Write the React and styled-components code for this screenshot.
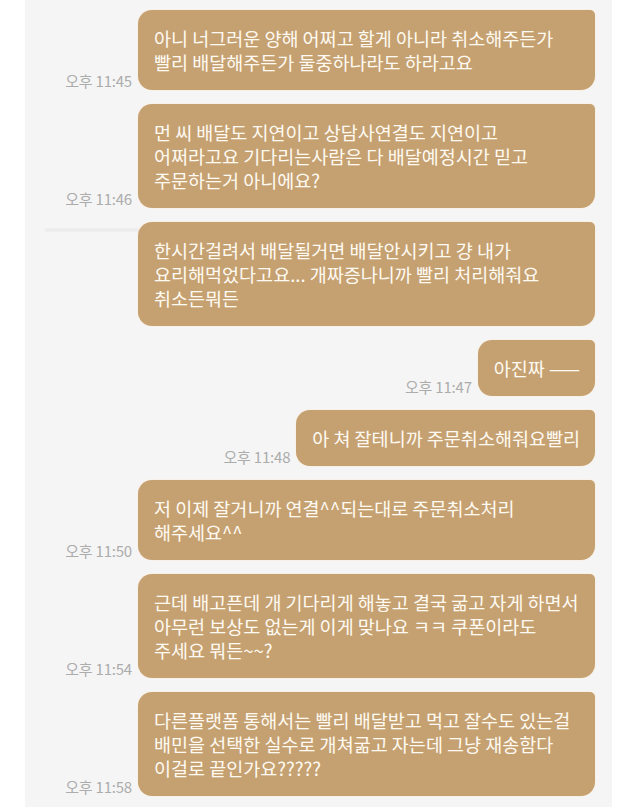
import React from 'react';
import styled, { createGlobalStyle } from 'styled-components';

const GlobalStyle = createGlobalStyle`
  html, body {
    margin: 0;
    padding: 0;
    background: #ffffff;
  }
  body {
    font-family: "Noto Sans CJK KR", "Noto Sans", sans-serif;
  }
`;

const Page = styled.div`
  width: 640px;
  min-height: 807px;
  background: #ffffff;
  overflow: hidden;
`;

const ChatPanel = styled.div`
  margin-left: 25px;
  width: 587px;
  min-height: 807px;
  box-sizing: border-box;
  padding: 10px 17px 0 0;
  background: #f5f5f5;
  display: flex;
  flex-direction: column;
  gap: 14px;
`;

const Row = styled.div`
  position: relative;
  display: flex;
  justify-content: flex-end;
  align-items: flex-end;
  gap: 6px;

  ${({ $shade }) => $shade && `
    &::before {
      content: '';
      position: absolute;
      left: 20px;
      top: 7px;
      width: 94px;
      height: 2px;
      background: rgba(0, 0, 0, 0.07);
      filter: blur(1px);
    }
  `}
`;

const Time = styled.span`
  font-size: 15px;
  line-height: 16px;
  color: #acacac;
  letter-spacing: -0.2px;
  white-space: nowrap;
  margin-bottom: 1px;
`;

const Bubble = styled.div`
  box-sizing: border-box;
  width: ${({ $full }) => ($full ? '457px' : 'auto')};
  padding: 16px 15px 16px 16px;
  background: #c5a172;
  border-radius: 14px 5px 14px 14px;
  box-shadow: 0 0 0 1px rgba(255, 236, 210, 0.35);
  color: #fffaf1;
  font-size: 18.5px;
  line-height: 24px;
  white-space: pre;
`;

const messages = [
  {
    lines: ['아니 너그러운 양해 어쩌고 할게 아니라 취소해주든가', '빨리 배달해주든가 둘중하나라도 하라고요'],
    time: '오후 11:45',
  },
  {
    lines: ['먼 씨 배달도 지연이고 상담사연결도 지연이고', '어쩌라고요 기다리는사람은 다 배달예정시간 믿고', '주문하는거 아니에요?'],
    time: '오후 11:46',
  },
  {
    lines: ['한시간걸려서 배달될거면 배달안시키고 걍 내가', '요리해먹었다고요... 개짜증나니까 빨리 처리해줘요', '취소든뭐든'],
    time: '',
    shade: true,
  },
  { lines: ['아진짜 ——'], time: '오후 11:47' },
  { lines: ['아 쳐 잘테니까 주문취소해줘요빨리'], time: '오후 11:48' },
  {
    lines: ['저 이제 잘거니까 연결^^되는대로 주문취소처리', '해주세요^^'],
    time: '오후 11:50',
  },
  {
    lines: ['근데 배고픈데 개 기다리게 해놓고 결국 굶고 자게 하면서', '아무런 보상도 없는게 이게 맞나요 ㅋㅋ 쿠폰이라도', '주세요 뭐든~~?'],
    time: '오후 11:54',
  },
  {
    lines: ['다른플랫폼 통해서는 빨리 배달받고 먹고 잘수도 있는걸', '배민을 선택한 실수로 개쳐굶고 자는데 그냥 재송함다', '이걸로 끝인가요?????'],
    time: '오후 11:58',
  },
];

const App = () => (
  <Page>
    <GlobalStyle />
    <ChatPanel>
      {messages.map((msg, i) => (
        <Row key={i} $shade={msg.shade}>
          {msg.time && <Time>{msg.time}</Time>}
          <Bubble $full={msg.lines.length > 1}>{msg.lines.join('\n')}</Bubble>
        </Row>
      ))}
    </ChatPanel>
  </Page>
);

export default App;
